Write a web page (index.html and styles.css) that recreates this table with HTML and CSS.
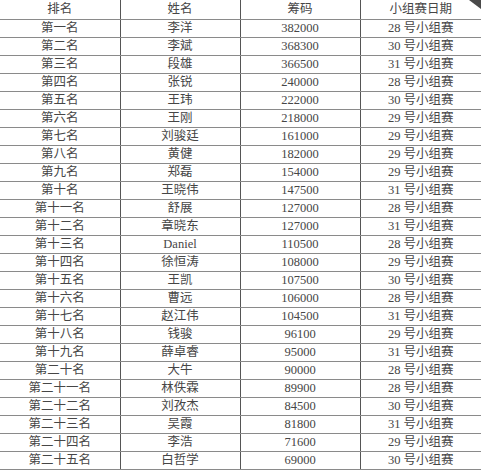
FILE: index.html
```html
<!DOCTYPE html>
<html lang="zh">
<head>
<meta charset="utf-8">
<title>排名</title>
<link rel="stylesheet" href="styles.css">
</head>
<body>
<div class="sheet">
<table class="rank">
<colgroup><col class="c1"><col class="c2"><col class="c3"><col class="c4"></colgroup>
<thead>
<tr><th>排名</th><th>姓名</th><th>筹码</th><th>小组赛日期</th></tr>
</thead>
<tbody>
<tr><td>第一名</td><td>李洋</td><td>382000</td><td>28 号小组赛</td></tr>
<tr><td>第二名</td><td>李斌</td><td>368300</td><td>30 号小组赛</td></tr>
<tr><td>第三名</td><td>段雄</td><td>366500</td><td>31 号小组赛</td></tr>
<tr><td>第四名</td><td>张锐</td><td>240000</td><td>28 号小组赛</td></tr>
<tr><td>第五名</td><td>王玮</td><td>222000</td><td>30 号小组赛</td></tr>
<tr><td>第六名</td><td>王刚</td><td>218000</td><td>29 号小组赛</td></tr>
<tr><td>第七名</td><td>刘骏廷</td><td>161000</td><td>29 号小组赛</td></tr>
<tr><td>第八名</td><td>黄健</td><td>182000</td><td>29 号小组赛</td></tr>
<tr><td>第九名</td><td>郑磊</td><td>154000</td><td>29 号小组赛</td></tr>
<tr><td>第十名</td><td>王晓伟</td><td>147500</td><td>31 号小组赛</td></tr>
<tr><td>第十一名</td><td>舒展</td><td>127000</td><td>28 号小组赛</td></tr>
<tr><td>第十二名</td><td>章晓东</td><td>127000</td><td>31 号小组赛</td></tr>
<tr><td>第十三名</td><td>Daniel</td><td>110500</td><td>28 号小组赛</td></tr>
<tr><td>第十四名</td><td>徐恒涛</td><td>108000</td><td>29 号小组赛</td></tr>
<tr><td>第十五名</td><td>王凯</td><td>107500</td><td>30 号小组赛</td></tr>
<tr><td>第十六名</td><td>曹远</td><td>106000</td><td>28 号小组赛</td></tr>
<tr><td>第十七名</td><td>赵江伟</td><td>104500</td><td>31 号小组赛</td></tr>
<tr><td>第十八名</td><td>钱骏</td><td>96100</td><td>29 号小组赛</td></tr>
<tr><td>第十九名</td><td>薛卓睿</td><td>95000</td><td>31 号小组赛</td></tr>
<tr><td>第二十名</td><td>大牛</td><td>90000</td><td>28 号小组赛</td></tr>
<tr><td>第二十一名</td><td>林佚霖</td><td>89900</td><td>28 号小组赛</td></tr>
<tr><td>第二十二名</td><td>刘孜杰</td><td>84500</td><td>30 号小组赛</td></tr>
<tr><td>第二十三名</td><td>吴霞</td><td>81800</td><td>31 号小组赛</td></tr>
<tr><td>第二十四名</td><td>李浩</td><td>71600</td><td>29 号小组赛</td></tr>
<tr><td>第二十五名</td><td>白哲学</td><td>69000</td><td>30 号小组赛</td></tr>
</tbody>
</table>
<svg class="corner" width="12" height="9" viewBox="0 0 12 9"><polygon points="0,0 12,0 12,9" fill="#4a4a4a"/></svg>
</div>
</body>
</html>
```

FILE: styles.css
```css
html, body {
  margin: 0;
  padding: 0;
  background: #ffffff;
}
.sheet {
  position: relative;
  width: 481px;
  height: 475px;
  overflow: hidden;
}
.rank {
  width: 481px;
  border-collapse: collapse;
  table-layout: fixed;
  font-family: "Liberation Serif", "Noto Sans CJK SC", serif;
  font-size: 12.5px;
  color: #464646;
}
.c1, .c2, .c3 { width: 120px; }
.c4 { width: 121px; }
.rank th, .rank td {
  padding: 0;
  text-align: center;
  font-weight: normal;
  height: 17px;
  line-height: 17px;
  border-bottom: 1px solid #8a8a8a;
  border-right: 1px solid #555555;
  white-space: nowrap;
}
.rank th { height: 19px; line-height: 19px; }
.rank th:last-child, .rank td:last-child { border-right: none; }
.corner {
  position: absolute;
  top: 0;
  right: 0;
}
```
